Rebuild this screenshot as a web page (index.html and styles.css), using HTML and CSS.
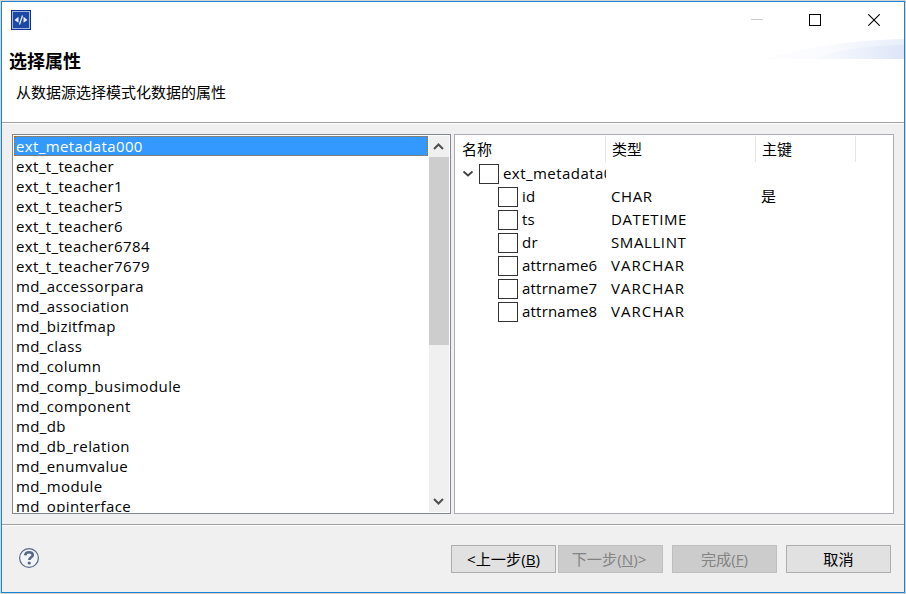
FILE: index.html
```html
<!DOCTYPE html>
<html lang="zh-CN">
<head>
<meta charset="utf-8">
<title>选择属性</title>
<link rel="stylesheet" href="styles.css">
</head>
<body>
<div class="window">
  <header class="header">
    <div class="titlebar">
      <svg class="app-icon" width="20" height="20" viewBox="0 0 20 20"><rect width="20" height="20" fill="#0c3590"/><rect x="1.500" y="1.500" width="17" height="17" fill="#1a48a4" stroke="#a3b6e0"/><path d="M7.500 6.800v6L3.500 10zM12.500 6.800v6l4-2.800z" fill="#e8eefa"/><path d="M11.500 5.500l-3 9" stroke="#e8eefa" stroke-width="1.300"/></svg>
      <div class="controls">
        <svg width="12" height="12"><path d="M0 5.500h12" stroke="#ccc"/></svg>
        <svg width="12" height="12"><rect x=".5" y=".5" width="11" height="11" fill="none" stroke="#000"/></svg>
        <svg width="12" height="12"><path d="M.3.3l11.400 11.400M11.700.3L.3 11.700" stroke="#000" stroke-width="1.100"/></svg>
      </div>
    </div>
    <h1 class="title">选择属性</h1>
    <p class="subtitle">从数据源选择模式化数据的属性</p>
    <svg class="swoosh" width="140" height="20" viewBox="0 0 140 20">
      <defs>
        <linearGradient id="a"><stop offset="0" stop-color="#fdfdff"/><stop offset=".45" stop-color="#fafbfe"/><stop offset="1" stop-color="#e8eefa"/></linearGradient>
        <linearGradient id="b"><stop offset="0" stop-color="#fcfdff"/><stop offset=".5" stop-color="#edf1fb"/><stop offset="1" stop-color="#dde5f7"/></linearGradient>
      </defs>
      <path d="M0 20C40 8 90 1 140 0v20z" fill="url(#a)"/>
      <path d="M45 20c30-9 60-14 95-14v14z" fill="url(#b)"/>
    </svg>
  </header>
  <main class="body">
    <div class="list">
      <ul class="items">
        <li class="selected"><span>ext_metadata000</span></li>
        <li><span>ext_t_teacher</span></li>
        <li><span>ext_t_teacher1</span></li>
        <li><span>ext_t_teacher5</span></li>
        <li><span>ext_t_teacher6</span></li>
        <li><span>ext_t_teacher6784</span></li>
        <li><span>ext_t_teacher7679</span></li>
        <li><span>md_accessorpara</span></li>
        <li><span>md_association</span></li>
        <li><span>md_bizitfmap</span></li>
        <li><span>md_class</span></li>
        <li><span>md_column</span></li>
        <li><span>md_comp_busimodule</span></li>
        <li><span>md_component</span></li>
        <li><span>md_db</span></li>
        <li><span>md_db_relation</span></li>
        <li><span>md_enumvalue</span></li>
        <li><span>md_module</span></li>
        <li><span>md_opinterface</span></li>
      </ul>
      <div class="scrollbar">
        <svg width="20" height="21"><path d="M5 13l4.500-4.500L14 13" fill="none" stroke="#505050" stroke-width="2"/></svg>
        <div class="thumb"></div>
        <svg class="down" width="20" height="21"><path d="M5 8l4.500 4.500L14 8" fill="none" stroke="#505050" stroke-width="2"/></svg>
      </div>
    </div>
    <div class="table">
      <div class="row head"><div>名称</div><div>类型</div><div>主键</div></div>
      <div class="row parent"><div><svg class="twisty" width="12" height="8"><path d="M1.500 1.500L6 5.500l4.500-4" fill="none" stroke="#404040" stroke-width="1.700"/></svg><i class="check"></i><span>ext_metadata000</span></div></div>
      <div class="row"><div><i class="check"></i><span>id</span></div><div class="type">CHAR</div><div>是</div></div>
      <div class="row"><div><i class="check"></i><span>ts</span></div><div class="type">DATETIME</div></div>
      <div class="row"><div><i class="check"></i><span>dr</span></div><div class="type">SMALLINT</div></div>
      <div class="row"><div><i class="check"></i><span>attrname6</span></div><div class="type wide">VARCHAR</div></div>
      <div class="row"><div><i class="check"></i><span>attrname7</span></div><div class="type wide">VARCHAR</div></div>
      <div class="row"><div><i class="check"></i><span>attrname8</span></div><div class="type wide">VARCHAR</div></div>
    </div>
  </main>
  <footer class="footer">
    <svg class="help" width="20" height="20" viewBox="0 0 20 20"><circle cx="10" cy="10" r="9.400" fill="#f3f4f7" stroke="#566787" stroke-width="1.200"/><path d="M6.200 7.300C6.400 5 8 4.200 10 4.200c2.300 0 3.800 1 3.800 2.800 0 2.300-3.500 2.300-3.500 5" fill="none" stroke="#566787" stroke-width="2.600"/><circle cx="10.200" cy="15" r="1.600" fill="#566787"/></svg>
    <button class="btn">&lt;上一步(<u>B</u>)</button>
    <button class="btn next" disabled>下一步(<u>N</u>)&gt;</button>
    <button class="btn gap" disabled>完成(<u>F</u>)</button>
    <button class="btn gap">取消</button>
  </footer>
</div>
</body>
</html>
```
FILE: styles.css
```css
* { box-sizing: border-box; }
body {
  margin: 0;
  padding: 1px;
  width: 906px;
  height: 594px;
  overflow: hidden;
  background: #d6d3d0;
  font: 15px/20px "Open Sans", "Noto Sans CJK SC", sans-serif;
  color: #000;
}
.window {
  width: 904px;
  height: 592px;
  border: 1px solid #1883d7;
  background: #f0f0f0;
  display: flex;
  flex-direction: column;
}
svg { display: block; flex: none; }
.header {
  position: relative;
  height: 121px;
  background: #fff;
  border-bottom: 1px solid #a0a0a0;
  flex: none;
}
.titlebar { display: flex; justify-content: space-between; padding: 8px 24px 0 9px; }
.controls { display: flex; gap: 47px; padding-top: 4px; }
.controls svg:first-child { margin-right: -1px; }
.title { margin: 19px 0 0 7px; font-size: 18px; line-height: 24px; font-weight: 700; }
.subtitle { margin: 9px 0 0 14px; line-height: 20px; }
.swoosh { position: absolute; right: 0; top: 37px; }
.body {
  height: 402px;
  flex: none;
  padding: 10px 10px;
  border-top: 1px solid #fff;
  border-bottom: 1px solid #a0a0a0;
  display: flex;
  gap: 3px;
}
.list { width: 439px; height: 380px; border: 1px solid #828790; background: #fff; padding: 1px; display: flex; gap: 1px; }
.items { list-style: none; margin: 0; padding: 0; width: 414px; overflow: hidden; font-size: 15px; letter-spacing: .38px; }
.items li { height: 20px; padding-left: 2px; white-space: nowrap; }
.items .selected { background: #3399ff; color: #fff; outline: 1px dotted #cc6600; outline-offset: -1px; }
.scrollbar { width: 20px; background: #f0f0f0; display: flex; flex-direction: column; }
.thumb { height: 188px; background: #cdcdcd; }
.down { margin-top: auto; }
.table { width: 440px; height: 380px; border: 1px solid #abadb3; background: #fff; padding-top: 1px; }
.row { display: grid; grid-template-columns: 151px 150px 100px; height: 23px; line-height: 23px; }
.row > div { padding-left: 5px; overflow: hidden; white-space: nowrap; }
.row > div:first-child { padding-left: 43px; display: flex; align-items: center; }
.row span { letter-spacing: .2px; }
.row.parent span { letter-spacing: .45px; }
.row .type { letter-spacing: .6px; }
.row .type.wide { letter-spacing: 1px; }
.head { height: 26px; line-height: 27px; }
.head > div { border-right: 1px solid #e5e5e5; padding-left: 6px; }
.row.head > div:first-child { display: block; padding-left: 7px; }
.row.parent > div:first-child { padding-left: 7px; }
.twisty { margin-right: 5px; }
.check { flex: none; width: 20px; height: 20px; border: 1px solid #333; margin-right: 4px; }
.footer { flex: 1; border-top: 1px solid #fff; display: flex; padding: 19px 13px 0 17px; }
.help { margin: 3px auto 0 0; }
.btn {
  width: 105px;
  height: 28px;
  padding: 0;
  border: 1px solid #adadad;
  background: #e1e1e1;
  font: inherit;
  font-size: 15.2px;
  color: #000;
  margin-left: 2px;
}
.btn.gap { margin-left: 9px; }
.btn.next { padding-right: 3px; }
.btn:disabled { background: #ccc; border-color: #bfbfbf; color: #838383; }
```
